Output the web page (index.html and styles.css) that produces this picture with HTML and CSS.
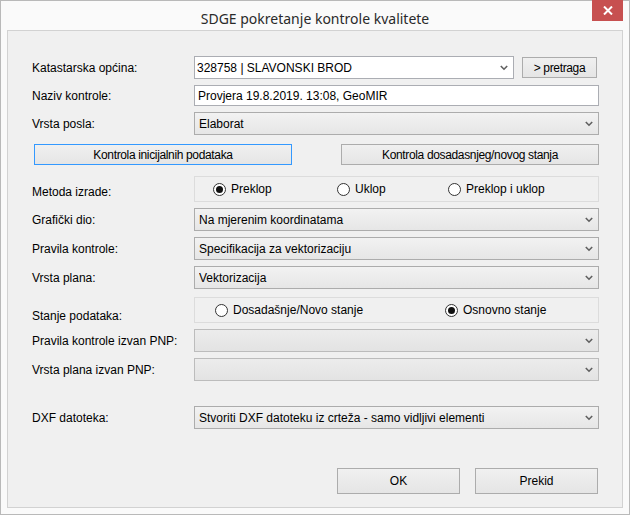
FILE: index.html
```html
<!DOCTYPE html>
<html>
<head>
<meta charset="utf-8">
<link rel="stylesheet" href="styles.css">
</head>
<body>
<div class="window">
  <div class="titlebar">
    <span class="tb-side"></span>
    <span class="title">SDGE pokretanje kontrole kvalitete</span>
    <span class="tb-side tb-right">
      <span class="close"><svg width="10" height="9" viewBox="0 0 10 9"><path d="M1 0.5 L9 8.5 M9 0.5 L1 8.5" stroke="#fff" stroke-width="2" fill="none"/></svg></span>
    </span>
  </div>
  <div class="client">
    <div class="row">
      <span class="lbl">Katastarska općina:</span>
      <div class="combo combo-edit combo-kat"><span class="val">328758 | SLAVONSKI BROD</span><svg class="arrow" width="8" height="6" viewBox="0 0 8 6"><polyline points="0.8,1 4,4.2 7.2,1" stroke="#606060" stroke-width="1.6" fill="none"/></svg></div>
      <div class="btn btn-search">&gt; pretraga</div>
    </div>
    <div class="row row-text">
      <span class="lbl">Naziv kontrole:</span>
      <div class="textbox"><span class="val">Provjera 19.8.2019. 13:08, GeoMIR</span></div>
    </div>
    <div class="row">
      <span class="lbl">Vrsta posla:</span>
      <div class="combo"><span class="val">Elaborat</span><svg class="arrow" width="8" height="6" viewBox="0 0 8 6"><polyline points="0.8,1 4,4.2 7.2,1" stroke="#606060" stroke-width="1.6" fill="none"/></svg></div>
    </div>
    <div class="row row-buttons">
      <div class="btn btn-wide btn-focus">Kontrola inicijalnih podataka</div>
      <div class="btn btn-wide">Kontrola dosadasnjeg/novog stanja</div>
    </div>
    <div class="row row-radio row-metoda">
      <span class="lbl lbl-low">Metoda izrade:</span>
      <div class="radiobox">
        <span class="opt opt-preklop"><span class="radio checked"></span>Preklop</span>
        <span class="opt opt-uklop"><span class="radio"></span>Uklop</span>
        <span class="opt"><span class="radio"></span>Preklop i uklop</span>
      </div>
    </div>
    <div class="row">
      <span class="lbl">Grafički dio:</span>
      <div class="combo"><span class="val">Na mjerenim koordinatama</span><svg class="arrow" width="8" height="6" viewBox="0 0 8 6"><polyline points="0.8,1 4,4.2 7.2,1" stroke="#606060" stroke-width="1.6" fill="none"/></svg></div>
    </div>
    <div class="row">
      <span class="lbl">Pravila kontrole:</span>
      <div class="combo"><span class="val">Specifikacija za vektorizaciju</span><svg class="arrow" width="8" height="6" viewBox="0 0 8 6"><polyline points="0.8,1 4,4.2 7.2,1" stroke="#606060" stroke-width="1.6" fill="none"/></svg></div>
    </div>
    <div class="row">
      <span class="lbl">Vrsta plana:</span>
      <div class="combo"><span class="val">Vektorizacija</span><svg class="arrow" width="8" height="6" viewBox="0 0 8 6"><polyline points="0.8,1 4,4.2 7.2,1" stroke="#606060" stroke-width="1.6" fill="none"/></svg></div>
    </div>
    <div class="row row-radio row-stanje">
      <span class="lbl lbl-lower">Stanje podataka:</span>
      <div class="radiobox radiobox-stanje">
        <span class="opt opt-dosad"><span class="radio"></span>Dosadašnje/Novo stanje</span>
        <span class="opt"><span class="radio checked"></span>Osnovno stanje</span>
      </div>
    </div>
    <div class="row">
      <span class="lbl">Pravila kontrole izvan PNP:</span>
      <div class="combo combo-disabled"><span class="val"></span><svg class="arrow" width="8" height="6" viewBox="0 0 8 6"><polyline points="0.8,1 4,4.2 7.2,1" stroke="#606060" stroke-width="1.6" fill="none"/></svg></div>
    </div>
    <div class="row">
      <span class="lbl">Vrsta plana izvan PNP:</span>
      <div class="combo combo-disabled"><span class="val"></span><svg class="arrow" width="8" height="6" viewBox="0 0 8 6"><polyline points="0.8,1 4,4.2 7.2,1" stroke="#606060" stroke-width="1.6" fill="none"/></svg></div>
    </div>
    <div class="row row-dxf">
      <span class="lbl">DXF datoteka:</span>
      <div class="combo"><span class="val">Stvoriti DXF datoteku iz crteža - samo vidljivi elementi</span><svg class="arrow" width="8" height="6" viewBox="0 0 8 6"><polyline points="0.8,1 4,4.2 7.2,1" stroke="#606060" stroke-width="1.6" fill="none"/></svg></div>
    </div>
    <div class="row row-footer">
      <div class="btn btn-dlg">OK</div>
      <div class="btn btn-dlg">Prekid</div>
    </div>
  </div>
</div>
</body>
</html>
```

FILE: styles.css
```css
* { box-sizing: border-box; }
html, body { margin: 0; padding: 0; }
body {
  width: 630px;
  height: 515px;
  overflow: hidden;
  font-family: "Liberation Sans", Arial, sans-serif;
  font-size: 12px;
  color: #000;
}
.window {
  width: 630px;
  height: 515px;
  border: 1px solid #b9b9b9;
  background: #fafafa;
  display: flex;
  flex-direction: column;
}
.titlebar {
  height: 29px;
  display: grid;
  grid-template-columns: 1fr auto 1fr;
  align-items: center;
}
.title {
  font-family: "Noto Sans", "Open Sans", sans-serif;
  font-size: 14px;
  color: #2a2a2a;
  padding-top: 5px;
}
.tb-right {
  display: flex;
  justify-content: flex-end;
  align-self: start;
  padding-right: 6px;
}
.close {
  width: 31px;
  height: 21px;
  margin-top: -1px;
  background: #c75050;
  display: flex;
  align-items: center;
  justify-content: center;
}
.client {
  flex: 1;
  margin: 0 6px 6px 6px;
  border: 1px solid #d2d2d2;
  background: #f0f0f0;
  padding: 25px 23px 0 24px;
  display: flex;
  flex-direction: column;
  gap: 6px;
}
.row {
  display: flex;
  align-items: center;
  height: 23px;
}
.lbl {
  width: 162px;
  flex: none;
  white-space: nowrap;
}
.lbl-low { padding-top: 5px; }
.lbl-lower { padding-top: 11px; }
.row-text { height: 21px; }
.row-buttons {
  height: 21px;
  margin-top: 3px;
  padding-left: 2px;
  justify-content: space-between;
}
.row-radio { height: 26px; }
.row-metoda { margin-top: 5px; }
.row-stanje { margin-top: 2px; }
.row-dxf { margin-top: 19px; }
.row-footer {
  height: 26px;
  margin-top: 33px;
  justify-content: flex-end;
  gap: 15px;
  padding-right: 1px;
}
.combo, .textbox {
  width: 405px;
  height: 23px;
  border: 1px solid #acacac;
  background: linear-gradient(#f2f2f2, #e6e6e6);
  display: flex;
  align-items: center;
  padding-left: 4px;
  padding-right: 5px;
}
.combo .val, .textbox .val {
  flex: 1;
  white-space: nowrap;
  overflow: hidden;
}
.combo-edit {
  background: #fff;
  padding-left: 2px;
  border-color: #abadb3;
}
.combo-kat { width: 320px; }
.combo-disabled {
  background: linear-gradient(#ececec, #e3e3e3);
  border-color: #bcbcbc;
}
.arrow { flex: none; }
.textbox {
  height: 21px;
  background: #fff;
  border-color: #abadb3;
  padding-left: 3px;
}
.btn {
  border: 1px solid #acacac;
  background: linear-gradient(#f0f0f0, #e5e5e5);
  display: flex;
  align-items: center;
  justify-content: center;
  white-space: nowrap;
  letter-spacing: -0.35px;
}
.btn-search {
  width: 75px;
  height: 21px;
  margin-left: 8px;
}
.btn-wide {
  width: 258px;
  height: 21px;
}
.btn-focus { border-color: #3399ff; }
.btn-dlg {
  width: 123px;
  height: 26px;
  letter-spacing: 0;
}
.radiobox {
  width: 405px;
  height: 26px;
  border: 1px solid #dcdcdc;
  display: flex;
  align-items: center;
  padding-left: 18px;
}
.radiobox-stanje { padding-left: 20px; }
.opt {
  display: flex;
  align-items: center;
  white-space: nowrap;
}
.opt-preklop { width: 124px; }
.opt-uklop { width: 111px; }
.opt-dosad { width: 230px; }
.radio {
  width: 13px;
  height: 13px;
  border: 1px solid #333;
  border-radius: 50%;
  background: #fff;
  margin-right: 5px;
  display: flex;
  align-items: center;
  justify-content: center;
  flex: none;
}
.radio.checked::after {
  content: "";
  width: 7px;
  height: 7px;
  border-radius: 50%;
  background: #111;
}
```
